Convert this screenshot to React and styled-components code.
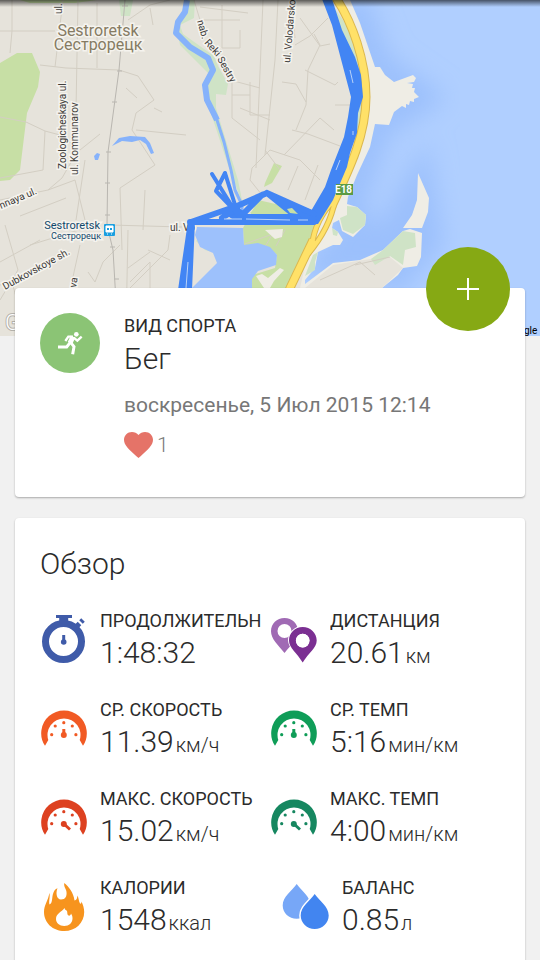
import React from "react";
import styled, { createGlobalStyle } from "styled-components";

const GlobalStyle = createGlobalStyle`
  * {
    box-sizing: border-box;
  }
  body {
    margin: 0;
    background: #f1f1f1;
    color: #2b2b2b;
    font-family: Roboto, "Noto Sans", sans-serif;
    overflow-x: hidden;
  }
`;

const Page = styled.main`
  height: 100vh;
  overflow: hidden;
`;

const MapStyle = styled.svg`
  display: block;
  width: 100%;
  height: 336px;
  .street {
    fill: none;
    stroke: #d3cec3;
    stroke-width: 1;
  }
  .rail {
    fill: none;
    stroke: #b9b6b0;
    stroke-width: 1;
  }
  .park {
    fill: #c7dfa5;
  }
  .grove {
    fill: #cfe3c6;
  }
  .beach {
    fill: #efede5;
  }
  .river {
    fill: none;
    stroke: #86b2fb;
    stroke-linejoin: round;
  }
  .road {
    fill: none;
    stroke: #ffe168;
    stroke-width: 7;
  }
  .road__edge {
    fill: none;
    stroke: #dcb84e;
    stroke-width: 9;
  }
  .road--thin {
    stroke-width: 4;
  }
  .road__edge--thin {
    stroke-width: 6;
  }
  .track {
    fill: none;
    stroke: #4285f4;
    stroke-width: 6;
    stroke-linecap: round;
    stroke-linejoin: round;
  }
  .track--narrow {
    stroke-width: 4;
  }
  .track__area {
    fill: #4285f4;
  }
  text {
    fill: #3c3a38;
    stroke: #f5f3ee;
    stroke-width: 3;
    paint-order: stroke;
    font-size: 10px;
  }
  .city {
    fill: #857b63;
    font-size: 16px;
    text-anchor: middle;
  }
  .station {
    fill: #12486b;
    font-size: 11px;
    text-anchor: end;
  }
  .station--small {
    font-size: 9px;
  }
  .plate {
    fill: #fff;
    stroke: none;
    font-weight: 700;
  }
  .copyright {
    fill: #000;
    stroke: none;
  }
  .watermark {
    fill: #fff;
    stroke: #b4b1aa;
    stroke-width: 2;
    font-size: 22px;
    font-weight: 300;
  }
`;

const Cards = styled.div`
  position: relative;
  display: flex;
  flex-direction: column;
  gap: 21px;
  margin-top: -48px;
  padding: 0 15px;
`;

const Card = styled.section`
  position: relative;
  padding: 25px;
  border-radius: 4px;
  background: #fff;
  box-shadow: 0 1px 2px rgba(0, 0, 0, 0.3);
`;

const SportCard = styled(Card)`
  display: flex;
  gap: 24px;
  padding-bottom: 38px;
`;

const SportBadge = styled.svg`
  flex: none;
  width: 60px;
  height: 60px;
  border-radius: 50%;
  background: #8bc475;
`;

const SportInfo = styled.div`
  padding-top: 1px;
`;

const AddButton = styled.button`
  position: absolute;
  top: -41px;
  right: 15px;
  display: flex;
  align-items: center;
  justify-content: center;
  width: 84px;
  height: 84px;
  padding: 0;
  border: 0;
  border-radius: 50%;
  background: #86a914;
  cursor: pointer;
`;

const Label = styled.div`
  font-size: 18px;
  line-height: 24px;
  white-space: nowrap;
  overflow: hidden;
`;

const SportName = styled.h1`
  margin: 0;
  font-size: 30px;
  font-weight: 300;
  line-height: 42px;
`;

const StartTime = styled.div`
  margin-top: 13px;
  color: #777;
  font-size: 21px;
  line-height: 24px;
`;

const Likes = styled.div`
  display: flex;
  align-items: center;
  gap: 4px;
  margin-top: 14px;
  color: #777;
  font-size: 21px;
  font-weight: 300;
  line-height: 28px;
`;

const OverviewCard = styled(Card)`
  min-height: 480px;
`;

const Title = styled.h2`
  margin: 0;
  font-size: 30px;
  font-weight: 300;
  line-height: 42px;
`;

const StatGrid = styled.dl`
  display: grid;
  grid-template-columns: 1fr 1fr;
  row-gap: 27px;
  margin: 24px 0 0;
`;

const StatStyle = styled.div`
  display: grid;
  grid-template-columns: 48px 1fr;
  column-gap: 12px;
  height: 62px;
  padding-left: ${({ $indent }) => ($indent ? "12px" : "0")};
  .stat__text {
    min-width: 0;
  }
`;

const Value = styled.dd`
  margin: 0;
  font-size: 30px;
  font-weight: 300;
  line-height: 40px;
  white-space: nowrap;
  .value__unit {
    margin-left: 2px;
    font-size: 20px;
  }
`;

const streets = [
  "M12 0V31L10 53M0 31H55M97 3V68M63 0L55 67M78 0L76 110M40 65L66 68L119 70",
  "M119 70L138 76L154 100L136 113L132 130L140 142L155 165L120 188L122 250",
  "M126 88L137 98M154 108L162 112M136 130L186 135M26 122L45 131L60 135L80 150L100 134",
  "M0 117L26 122M45 131L43 170L0 178M78 150L62 178L48 190L75 180L85 220",
  "M0 200L48 190M20 216L66 198M5 225L18 270L0 300M0 262L40 240M30 245L95 225",
  "M110 225L182 227M128 230L126 330M145 190L143 230M170 235L168 250L128 290",
  "M148 250L170 260M128 268L150 252M130 282L150 262M150 262V310M80 245L60 336",
  "M120 245L103 262L95 282L88 272M0 285L12 282L25 330M85 160L76 220",
  "M128 20L150 5L170 0M150 8L153 25M194 0L200 20H240M200 7L248 13M222 5V48H240V30",
  "M224 55L230 80L260 88M232 82V118L260 140M250 82V115H270M240 108L270 120M232 95H250",
  "M263 0L256 168M278 0L275 60L265 155M291 0L295 38M300 18L320 46L330 44M295 45L310 36L328 18",
  "M314 34L320 45L308 70L306 105L296 130M282 82L296 84L306 102M305 70L335 85L338 82",
  "M284 155L320 118M292 130L308 134L340 146M335 105H350M320 118L334 130M265 150L280 170",
  "M250 180L252 168L270 150L300 160L320 180M298 166L288 190M318 165L305 200M250 180L262 195",
  "M275 230L260 255M285 230L276 246M242 245L270 235M320 280L360 262L375 275M355 265L390 257",
];

const SportMap = () => (
  <MapStyle
    viewBox="0 0 540 336"
    preserveAspectRatio="xMidYMax slice"
    role="img"
    aria-label="Sestroretsk"
  >
    <defs>
      <filter id="shore" x="-30%" y="-30%" width="160%" height="160%">
        <feGaussianBlur stdDeviation="12" />
      </filter>
      <linearGradient id="topShade" x1="0" y1="0" x2="0" y2="1">
        <stop offset="0" stopColor="#000" stopOpacity="0.6" />
        <stop offset="1" stopColor="#000" stopOpacity="0" />
      </linearGradient>
    </defs>
    <rect width="540" height="336" fill="#b0cfff" />
    <path
      d="M350 0L375 67L417 97L375 124L345 210L362 235L315 270L383 250L418 190L426 240L382 288"
      fill="none"
      stroke="#9bc0fc"
      strokeWidth="34"
      filter="url(#shore)"
    />
    <path
      className="beach"
      d="M0 0H350L360 23L375 67H380L385 75L394 82L413 75L416 78L414 82L407 83L413 84L412 88H415L414 92L419 97L414 99V102L410 101L409 105L406 104V108L402 106L394 112L389 125L375 124L370 147L357 175L348 197L347 204L357 207L366 215L365 225L353 237L342 231L339 220L333 223L332 228L338 232L343 240L340 245H333L318 252L315 268L305 280V284L333 263L360 260L383 250L403 231L410 229L422 233L421 257L417 266L403 268L398 275L382 288L340 336H0Z"
    />
    <path
      fill="#e6e3db"
      d="M0 0H338L356 30L365 70L366 110L356 150L335 200L315 222L300 288V336H0ZM305 288L333 265L370 259L390 257L403 268L382 288L340 336H270Z"
    />
    <path
      className="beach"
      d="M418 173L429 198L428 212L422 228L403 228L412 215L417 200Z"
    />
    <path
      className="park"
      d="M0 63L17 53H32L40 72L38 87L27 113L20 170L10 180L0 181ZM20 0H97L75 3H30ZM265 183L274 163L282 166L272 183L264 187Z"
    />
    <path
      className="park"
      d="M243 228L258 200L280 205L320 225L312 245L290 288L285 336H252V275L275 268L277 255L268 247L244 245Z"
    />
    <path
      className="grove"
      d="M119 0H133L130 16H121ZM187 0H195L194 18L180 25L183 34L214 56L218 66L228 84L226 95L216 94V108L238 180L243 205L228 165L205 95L210 75L180 45L176 25ZM332 5L354 35L363 65L364 96L358 160L350 120L358 85Z"
    />
    <path
      className="grove"
      d="M347 206L357 207L366 215L365 225L353 234L343 230L340 218L347 215ZM315 262L318 252L313 255L305 276L315 270ZM371 259L383 250L403 231L415 233L416 247L405 250L403 265L390 256L375 265ZM332 228L338 232L337 236L333 235ZM200 236L204 247L212 252L205 250L196 241Z"
    />
    {streets.map((street) => (
      <path key={street} className="street" d={street} />
    ))}
    <path
      className="rail"
      d="M125 0L119 70L108 152L107 225L113 250L118 336M122 6H128M117 71H122M112 102H117M106 152H111M105 183H110M105 215H110M110 247H115M114 279H119"
    />
    <path
      d="M197 227L243 228L244 245L258 243L270 247L277 255L276 265L258 271L252 279V336H184L192 288L200 280L217 263L213 253L200 247L195 235Z"
      fill="#9dc1fc"
    />
    <path className="beach" d="M256 276L262 274L268 278L280 268L284 270L274 281L270 288H264Z" />
    <path className="beach" d="M265 230L283 229L282 237L275 239Z" />
    <path
      className="river"
      strokeWidth="6"
      d="M187 0L185 12L178 22L176 33L190 47L208 58L213 70L205 85L207 100L217 120"
    />
    <path
      className="river"
      strokeWidth="3"
      d="M216 117L224 142L231 170L235 190L242 205V225"
    />
    <path
      fill="#86b2fb"
      d="M112 146L119 138L130 136L145 137L150 143L154 153L151 154L146 144L140 140L132 142L122 141ZM94 156L97 153L100 154L98 160L95 160Z"
    />
    <path
      className="road__edge"
      d="M336 -2C352 22 366 60 366 97C366 135 350 168 332 206"
    />
    <path
      className="road__edge road__edge--thin"
      d="M334 200Q315 220 312 245M335 200Q330 228 308 254"
    />
    <path className="road__edge" d="M313 240L290 288L270 336" />
    <path className="road" d="M336 -2C352 22 366 60 366 97C366 135 350 168 332 206" />
    <path
      className="road road--thin"
      d="M334 200Q315 220 312 245M335 200Q330 228 308 254"
    />
    <path className="road" d="M313 240L290 288L270 336" />

    <g>
      <text className="city" x="98" y="36">
        Sestroretsk
      </text>
      <text className="city" x="98" y="50">
        Сестрорецк
      </text>
      <text className="station" x="100" y="229">
        Sestroretsk
      </text>
      <text className="station station--small" x="101" y="239">
        Сестрорецк
      </text>
      <text transform="translate(62 14) rotate(-90)">ul.</text>
      <text transform="translate(66 169) rotate(-90)">Zoologicheskaya ul.</text>
      <text transform="translate(78 175) rotate(-90)">ul. Kommunarov</text>
      <text transform="translate(197 21) rotate(74)">nab.</text>
      <text transform="translate(204 43) rotate(48)">Reki</text>
      <text transform="translate(217 59) rotate(60)">Sestry</text>
      <text transform="translate(290 63) rotate(-85)">ul. Volodarsko</text>
      <text transform="translate(1 209) rotate(-23)">nnaya ul.</text>
      <text transform="translate(5 290) rotate(-29)">Dubkovskoye sh.</text>
      <text transform="translate(76 288) rotate(-80)">va</text>
      <text x="170" y="231">
        ul. Vo
      </text>
      <text className="watermark" x="5" y="330">
        G
      </text>
      <text className="copyright" x="524" y="334">
        gle
      </text>
    </g>
    <rect x="104" y="224" width="11" height="12" rx="1" fill="#1a9fe0" />
    <path
      d="M106 226H113V232H106ZM107 234H108M111 234H112"
      fill="#fff"
      stroke="#fff"
    />
    <path d="M107 228H109V230H107ZM110 228H112V230H110Z" fill="#1a9fe0" />

    <path
      className="track__area"
      d="M322 -1L332 25L342 63L351 97L348 117L344 137L331 170L325 187L311 211L311 224H318L333 200L347 167L350 153L357 133L358 113L363 97L361 75L355 57L342 30L332 -1Z"
    />
    <path
      className="track__area"
      d="M188 221H195L192 290H178L182 262ZM222 212L236 206L248 214L312 214V221H235ZM266 192L314 211L300 219Z"
    />
    <path
      className="track"
      d="M191 222L237 206L267 193L314 214M190 222H314M267 193L298 218M262 195L240 217M237 208L222 218"
    />
    <path
      className="track track--narrow"
      d="M212 174L238 216M225 173L216 191L240 216M225 173L236 208L242 217"
    />
    <path d="M287 209L292 208L298 214L290 213ZM250 213L262 202L273 213Z" fill="#c7dfa5" />
    <path
      d="M350 70L353 83M353 135V131M336 170L340 160M224 219H242M246 219L290 220M298 220H308M186 288L188 262"
      fill="none"
      stroke="#b9d2f8"
    />
    <rect x="336" y="184" width="17" height="11" fill="#5c9b45" />
    <text className="plate" x="335" y="193">
      E18
    </text>
    <rect width="540" height="7" fill="url(#topShade)" />
  </MapStyle>
);

const StatIcon = styled.svg`
  width: 48px;
  height: 62px;
`;

const TimerIcon = () => (
  <StatIcon viewBox="0 0 48 62" fill="none" stroke="#3f5ba9" aria-hidden="true">
    <circle cx="23.5" cy="32.5" r="18" strokeWidth="7" />
    <path d="M16 7.5H32" strokeWidth="3" />
    <path d="M23.7 8V14" strokeWidth="9" />
    <path d="M36 18L39.5 14.5M41 13L43 11" strokeWidth="5" />
    <path d="M23.7 26V33" strokeWidth="3" />
    <circle cx="23.7" cy="33" r="2.8" fill="#3f5ba9" stroke="none" />
  </StatIcon>
);

const GaugeIcon = ({ color, max }) => (
  <StatIcon viewBox="0 0 48 62" fill={color} aria-hidden="true">
    <path d="M5 47.8A22.8 22.8 0 1 1 43 47.8L39.7 42A16.5 16.5 0 1 0 8.3 42Z" />
    <circle cx="11.7" cy="36.7" r="1.6" />
    <circle cx="15.2" cy="28" r="1.6" />
    <circle cx="23.8" cy="24.7" r="1.6" />
    <circle cx="32.3" cy="28" r="1.6" />
    <circle cx="35.9" cy="36.7" r="1.6" />
    <circle cx="23.8" cy="37" r="3" />
    <path
      d={max ? "M24 37L30 42.5" : "M23.8 37V31"}
      stroke={color}
      strokeWidth="3"
    />
  </StatIcon>
);

const PinsIcon = () => (
  <StatIcon viewBox="0 0 48 62" fillRule="evenodd" aria-hidden="true">
    <path
      fill="#a06ab4"
      d="M14.5 9C6.8 9 1 14.8 1 22.3C1 30 8 36 14.5 44C21 36 28 30 28 22.3C28 14.8 22.2 9 14.5 9ZM14.5 15A7 7 0 1 1 14.5 29A7 7 0 1 1 14.5 15Z"
    />
    <path
      fill="#7b2f92"
      stroke="#fff"
      strokeWidth="2"
      paintOrder="stroke"
      d="M32.7 18C25 18 19 24 19 31.5C19 39 27 44 32.7 53.5C38.5 44 46.7 39 46.7 31.5C46.7 24 40.5 18 32.7 18ZM32.7 24.8A6.8 6.8 0 1 1 32.7 38.4A6.8 6.8 0 1 1 32.7 24.8Z"
    />
    <circle cx="32.7" cy="31.6" r="6.8" fill="#fff" />
  </StatIcon>
);

const FlameIcon = () => (
  <StatIcon viewBox="0 0 48 62" aria-hidden="true">
    <path
      fill="#f7941e"
      d="M24.3 7C29 11 33.5 16.5 34.5 24.5C36.5 24 37.3 22.5 37.3 19.5C39 22 38.5 25 40 27.5C41 28 41.5 27 41.5 25.5C43 29 44.2 32 44.2 36C44.2 47 35.5 55 24.3 55C13 55 4 47 4 36C4 29 8.5 24 9.3 17C10.5 20 8.5 25.5 9.5 28.5C13 27 11.5 21 13.5 16.5C14.5 14 16 12.5 17.5 12.3C15.5 17 16.5 23.5 21 23.5C25.5 23.5 27 20 26.5 16C26.2 12.5 23.5 11 24.3 7Z"
    />
    <path
      fill="#fff"
      d="M24.5 32C21.5 36 16 37.5 16 43C16 47 19.5 50 24.3 50C29 50 32.5 47 32.5 42.5C32.5 40.5 32 39 31 37.5C30.8 39.3 29.5 40 28.5 39.5C26.5 38 28 35.5 26.5 34.5C25.5 34 25 33.5 24.5 32Z"
    />
  </StatIcon>
);

const DropsIcon = () => (
  <StatIcon viewBox="0 0 48 62" aria-hidden="true">
    <path
      fill="#77a7f7"
      d="M14.7 8C10 15 0.7 20.5 0.7 29.5C0.7 37 7 42.8 14.7 42.8C22.5 42.8 28.5 37 28.5 29.5C28.5 20.5 19.5 15 14.7 8Z"
    />
    <path
      fill="#4285f0"
      stroke="#fff"
      strokeWidth="3"
      paintOrder="stroke"
      d="M32.7 18C28 25 18.7 30.5 18.7 39.5C18.7 47 25 53 32.7 53C40.5 53 46.7 47 46.7 39.5C46.7 30.5 37.5 25 32.7 18Z"
    />
  </StatIcon>
);

const stats = [
  { id: 1, label: "ПРОДОЛЖИТЕЛЬН", value: "1:48:32", icon: <TimerIcon /> },
  {
    id: 2,
    label: "ДИСТАНЦИЯ",
    value: "20.61",
    unit: "км",
    icon: <PinsIcon />,
  },
  {
    id: 3,
    label: "СР. СКОРОСТЬ",
    value: "11.39",
    unit: "км/ч",
    icon: <GaugeIcon color="#f15a24" />,
  },
  {
    id: 4,
    label: "СР. ТЕМП",
    value: "5:16",
    unit: "мин/км",
    icon: <GaugeIcon color="#0f9d58" />,
  },
  {
    id: 5,
    label: "МАКС. СКОРОСТЬ",
    value: "15.02",
    unit: "км/ч",
    icon: <GaugeIcon color="#dd4120" max />,
  },
  {
    id: 6,
    label: "МАКС. ТЕМП",
    value: "4:00",
    unit: "мин/км",
    icon: <GaugeIcon color="#168760" max />,
  },
  {
    id: 7,
    label: "КАЛОРИИ",
    value: "1548",
    unit: "ккал",
    icon: <FlameIcon />,
  },
  {
    id: 8,
    label: "БАЛАНС",
    value: "0.85",
    unit: "л",
    icon: <DropsIcon />,
    indent: true,
  },
];

const Stat = ({ stat }) => {
  const { label, value, unit, icon, indent } = stat || {};
  return (
    <StatStyle $indent={indent}>
      {icon}
      <div className="stat__text">
        <Label as="dt">{label}</Label>
        <Value>
          {value}
          {unit && <span className="value__unit">{unit}</span>}
        </Value>
      </div>
    </StatStyle>
  );
};

const App = () => {
  return (
    <>
      <GlobalStyle />
      <Page>
        <SportMap />
        <Cards>
          <SportCard>
            <SportBadge viewBox="0 0 180 180" aria-hidden="true">
              <circle cx="109" cy="64" r="7" fill="#fff" />
              <g fill="none" stroke="#fff" strokeWidth="7">
                <path d="M76 84L85 71L99 71" />
                <path d="M101 74L112 83L125 71" />
                <path d="M90 86L102 101L98 124" strokeWidth="9" />
                <path d="M91 88L80 102H54" strokeWidth="9" />
                <path d="M99 71L90 90" strokeWidth="15" />
              </g>
            </SportBadge>
            <SportInfo>
              <Label>ВИД СПОРТА</Label>
              <SportName>Бег</SportName>
              <StartTime>воскресенье, 5 Июл 2015 12:14</StartTime>
              <Likes>
                <svg
                  width="29"
                  height="26"
                  viewBox="2 3 20 18.35"
                  preserveAspectRatio="none"
                  fill="#e57368"
                  aria-hidden="true"
                >
                  <path d="M12 21.35l-1.45-1.32C5.4 15.36 2 12.28 2 8.5 2 5.42 4.42 3 7.5 3c1.74 0 3.41.81 4.5 2.09C13.09 3.81 14.76 3 16.5 3 19.58 3 22 5.42 22 8.5c0 3.78-3.4 6.86-8.55 11.54L12 21.35z" />
                </svg>
                1
              </Likes>
            </SportInfo>
            <AddButton type="button" aria-label="Добавить">
              <svg width="22" height="22" viewBox="0 0 22 22" aria-hidden="true">
                <path d="M11 0V22M0 11H22" stroke="#fff" strokeWidth="2" />
              </svg>
            </AddButton>
          </SportCard>
          <OverviewCard>
            <Title>Обзор</Title>
            <StatGrid>
              {stats.map((stat) => (
                <Stat key={stat.id} stat={stat} />
              ))}
            </StatGrid>
          </OverviewCard>
        </Cards>
      </Page>
    </>
  );
};

export default App;
